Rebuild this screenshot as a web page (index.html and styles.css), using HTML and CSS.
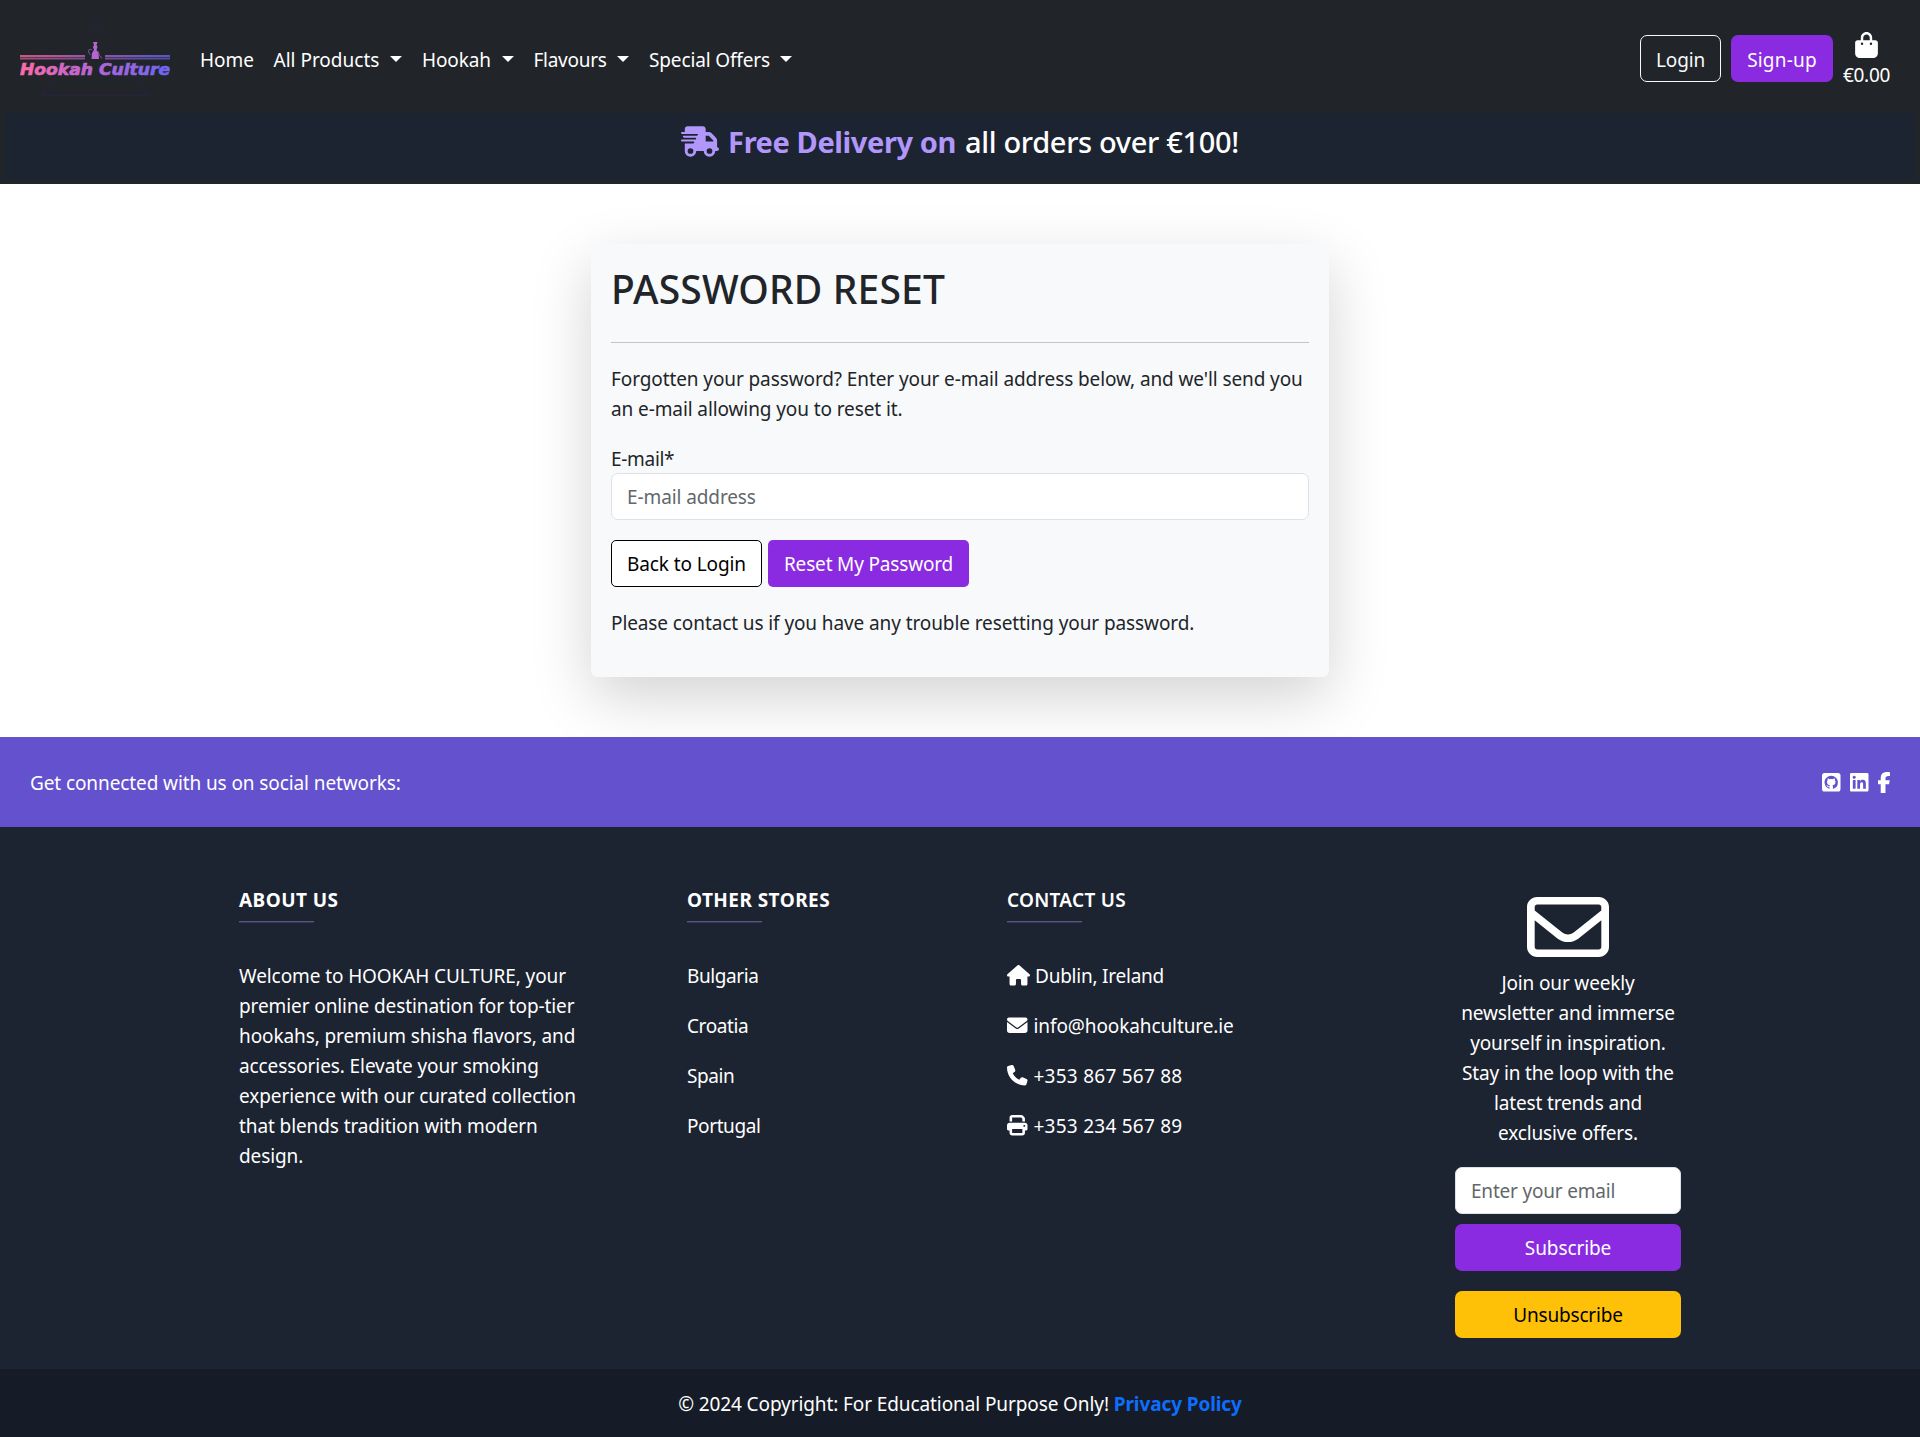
FILE: index.html
```html
<!DOCTYPE html>
<html lang="en">
<head>
<meta charset="utf-8">
<title>Hookah Culture - Password Reset</title>
<link rel="stylesheet" href="styles.css">
</head>
<body>
<header class="header">
  <nav class="navbar">
    <svg class="logo" viewBox="0 0 150 90" role="img" aria-label="Hookah Culture">
      <defs><linearGradient id="brand" gradientUnits="userSpaceOnUse" x1="0" y1="0" x2="150" y2="0"><stop offset="0" stop-color="#ff6aa6"/><stop offset=".5" stop-color="#b565d8"/><stop offset="1" stop-color="#6b66f5"/></linearGradient></defs>
      <path d="M65 17.500L75 4l10.500 13.500M32 63L22 77.500H129L118 63" fill="none" stroke="#2d1f42" stroke-width="1.200"/>
      <path d="M0 37h65v2h-65zM85 37h65v2h-65z" fill="url(#brand)" opacity=".75"/>
      <path d="M0 39.500h65v2h-65zM85 39.500h65v2h-65z" fill="url(#brand)" opacity=".6"/>
      <path d="M73 24h4.500l-1 3 1 2-1 3 2 3 .5 6h-7.500l.5-6 2-3-1-3 1-2z" fill="#b565d0"/>
      <path d="M72 32q-4-2-3.500 2l2 3M78 33q1 5 4 7.500" fill="none" stroke="#80509a" stroke-width="1"/>
      <text class="logo-text" x="0" y="56.500" textLength="150" lengthAdjust="spacingAndGlyphs" fill="url(#brand)" stroke="url(#brand)">Hookah Culture</text>
    </svg>
    <ul class="menu">
      <li class="menu-home">Home</li>
      <li class="menu-all">All Products<i class="caret"></i></li>
      <li class="menu-hookah">Hookah<i class="caret"></i></li>
      <li class="menu-flavours">Flavours<i class="caret"></i></li>
      <li class="menu-offers">Special Offers<i class="caret"></i></li>
    </ul>
    <div class="account">
      <a class="btn btn-login">Login</a>
      <a class="btn btn-purple btn-signup">Sign-up</a>
      <a class="bag">
        <svg class="bag-icon" viewBox="0 0 448 512" fill="currentColor"><path d="M160 112c0-35.300 28.700-64 64-64s64 28.700 64 64v48H160V112zm-48 48H48c-26.500 0-48 21.500-48 48V416c0 53 43 96 96 96H352c53 0 96-43 96-96V208c0-26.500-21.500-48-48-48H336V112C336 50.100 285.900 0 224 0S112 50.100 112 112v48zm24 48a24 24 0 1 1 0 48 24 24 0 1 1 0-48zm152 24a24 24 0 1 1 48 0 24 24 0 1 1 -48 0z"/></svg>
        €0.00
      </a>
    </div>
  </nav>
  <div class="banner">
    <svg class="truck" viewBox="0 0 640 512" fill="currentColor"><path d="M112 0C85.500 0 64 21.500 64 48V96H16c-8.800 0-16 7.200-16 16s7.200 16 16 16H64 272c8.800 0 16 7.200 16 16s-7.200 16-16 16H64 48c-8.800 0-16 7.200-16 16s7.200 16 16 16H64 240c8.800 0 16 7.200 16 16s-7.200 16-16 16H64 16c-8.800 0-16 7.200-16 16s7.200 16 16 16H64 208c8.800 0 16 7.200 16 16s-7.200 16-16 16H64V416c0 53 43 96 96 96s96-43 96-96H384c0 53 43 96 96 96s96-43 96-96h32c17.700 0 32-14.300 32-32s-14.300-32-32-32V288 256 237.300c0-17-6.700-33.300-18.700-45.300L512 114.700c-12-12-28.300-18.700-45.300-18.700H416V48c0-26.500-21.500-48-48-48H112zM544 237.300V256H416V160h50.700L544 237.300zM160 368a48 48 0 1 1 0 96 48 48 0 1 1 0-96zm272 48a48 48 0 1 1 96 0 48 48 0 1 1 -96 0z"/></svg>
    <strong class="banner-lead">Free Delivery on</strong>
    <span class="banner-rest">all orders over €100!</span>
  </div>
</header>

<main class="main">
  <section class="card">
    <h1 class="card-title">PASSWORD RESET</h1>
    <hr class="rule">
    <p class="para">Forgotten your password? Enter your e-mail address below, and we'll send you<br>an e-mail allowing you to reset it.</p>
    <label class="label">E-mail*</label>
    <div class="field">E-mail address</div>
    <div class="actions">
      <a class="btn btn-back">Back to Login</a>
      <a class="btn btn-purple btn-reset">Reset My Password</a>
    </div>
    <p class="para">Please contact us if you have any trouble resetting your password.</p>
  </section>
</main>

<footer class="footer">
  <section class="social">
    <span>Get connected with us on social networks:</span>
    <div class="social-icons">
      <svg class="ic-square" viewBox="0 0 18 18"><rect width="18" height="18" rx="2.500" fill="#fff"/><path transform="translate(2.500 2.700) scale(.81)" fill="#6351ce" d="M8 0C3.580 0 0 3.580 0 8c0 3.540 2.290 6.530 5.470 7.590.4.070.55-.17.55-.38 0-.19-.01-.82-.01-1.490-2.010.37-2.530-.49-2.690-.94-.09-.23-.48-.94-.82-1.130-.28-.15-.68-.52-.01-.53.63-.01 1.080.58 1.230.82.72 1.210 1.870.87 2.330.66.07-.52.28-.87.51-1.070-1.780-.2-3.640-.89-3.640-3.950 0-.87.31-1.590.82-2.150-.08-.2-.36-1.020.08-2.120 0 0 .67-.21 2.200.82.64-.18 1.320-.27 2-.27s1.360.09 2 .27c1.530-1.040 2.200-.82 2.200-.82.44 1.100.16 1.920.08 2.120.51.56.82 1.270.82 2.150 0 3.070-1.870 3.750-3.650 3.950.29.25.54.73.54 1.480 0 1.070-.01 1.930-.01 2.200 0 .21.15.46.55.38A8.010 8.010 0 0 0 16 8c0-4.420-3.580-8-8-8z"/></svg>
      <svg class="ic-square" viewBox="0 32 448 448" fill="currentColor"><path d="M416 32H31.900C14.300 32 0 46.500 0 64.300v383.400C0 465.500 14.300 480 31.900 480H416c17.600 0 32-14.500 32-32.300V64.300c0-17.800-14.400-32.300-32-32.300zM135.400 416H69V202.200h66.500V416zm-33.200-243c-21.300 0-38.500-17.300-38.500-38.500S80.900 96 102.200 96c21.200 0 38.500 17.300 38.500 38.500 0 21.300-17.200 38.500-38.500 38.500zm282.100 243h-66.400V312c0-24.800-.5-56.700-34.500-56.700-34.600 0-39.900 27-39.900 54.900V416h-66.400V202.200h63.700v29.200h.9c8.900-16.800 30.600-34.500 62.900-34.500 67.200 0 79.700 44.300 79.700 101.900V416z"/></svg>
      <svg class="ic-fb" viewBox="14 0 292 512" fill="currentColor"><path d="M80 299.300V512H196V299.300h86.500l18-97.800H196V166.900c0-51.700 20.300-71.500 72.700-71.500c16.300 0 29.400 .4 37 1.200V7.900C291.400 4 256.400 0 236.200 0C129.300 0 80 50.500 80 159.400v42.100H14v97.800H80z"/></svg>
    </div>
  </section>
  <section class="columns">
    <div class="col">
      <h6 class="col-title">ABOUT US</h6>
      <hr class="accent">
      <p>Welcome to HOOKAH CULTURE, your<br>premier online destination for top-tier<br>hookahs, premium shisha flavors, and<br>accessories. Elevate your smoking<br>experience with our curated collection<br>that blends tradition with modern<br>design.</p>
    </div>
    <div class="col">
      <h6 class="col-title">OTHER STORES</h6>
      <hr class="accent">
      <p class="item store">Bulgaria</p>
      <p class="item store">Croatia</p>
      <p class="item store">Spain</p>
      <p class="item store">Portugal</p>
    </div>
    <div class="col">
      <h6 class="col-title col-title-medium">CONTACT US</h6>
      <hr class="accent">
      <p class="item place"><svg class="ic-home" viewBox="0 0 576 512" fill="currentColor"><path d="M575.800 255.500c0 18-15 32.100-32 32.100h-32l.7 160.200c0 2.700-.2 5.400-.5 8.100V472c0 22.100-17.900 40-40 40H456c-1.100 0-2.200 0-3.300-.1c-1.400 .1-2.800 .1-4.200 .1H416 392c-22.100 0-40-17.900-40-40V448 384c0-17.700-14.300-32-32-32H256c-17.700 0-32 14.300-32 32v64 24c0 22.100-17.900 40-40 40H160 128.100c-1.500 0-3-.1-4.500-.2c-1.200 .1-2.400 .2-3.600 .2H104c-22.100 0-40-17.900-40-40V360c0-.9 0-1.900 .1-2.800V287.600H32c-18 0-32-14-32-32.100c0-9 3-17 10-24L266.400 8c7-7 15-8 22-8s15 2 21 7L564.800 231.500c8 7 12 15 11 24z"/></svg>Dublin, Ireland</p>
      <p class="item"><svg class="ic-line" viewBox="0 0 512 512" fill="currentColor"><path d="M48 64C21.500 64 0 85.500 0 112c0 15.100 7.100 29.300 19.200 38.400L236.800 313.600c11.400 8.500 27 8.500 38.400 0L492.800 150.400c12.100-9.100 19.200-23.300 19.200-38.400c0-26.500-21.500-48-48-48H48zM0 176V384c0 35.300 28.700 64 64 64H448c35.300 0 64-28.700 64-64V176L294.400 339.200c-22.800 17.100-54 17.100-76.800 0L0 176z"/></svg>info@hookahculture.ie</p>
      <p class="item phone"><svg class="ic-line" viewBox="0 0 512 512" fill="currentColor"><path d="M164.900 24.600c-7.700-18.600-28-28.500-47.400-23.200l-88 24C12.100 30.200 0 46 0 64C0 311.400 200.600 512 448 512c18 0 33.800-12.100 38.600-29.500l24-88c5.300-19.400-4.600-39.700-23.200-47.400l-96-40c-16.300-6.800-35.200-2.100-46.300 11.600L304.700 368C234.300 334.700 177.300 277.700 144 207.300L193.300 167c13.700-11.200 18.400-30 11.600-46.300l-40-96z"/></svg>+353 867 567 88</p>
      <p class="item phone"><svg class="ic-line" viewBox="0 0 512 512" fill="currentColor"><path d="M128 0C92.700 0 64 28.700 64 64v96h64V64H354.700L384 93.300V160h64V93.300c0-17-6.700-33.300-18.700-45.300L400 18.700C388 6.700 371.700 0 354.700 0H128zM384 352v32 64H128V384 368 352H384zm64 32h32c17.700 0 32-14.300 32-32V256c0-35.300-28.700-64-64-64H64c-35.300 0-64 28.700-64 64v96c0 17.700 14.300 32 32 32H64v64c0 35.300 28.700 64 64 64H384c35.300 0 64-28.700 64-64V384zM432 248a24 24 0 1 1 0 48 24 24 0 1 1 0-48z"/></svg>+353 234 567 89</p>
    </div>
    <div class="col newsletter">
      <svg class="mail" viewBox="0 64 512 384" preserveAspectRatio="none" fill="currentColor"><path d="M64 112c-8.800 0-16 7.200-16 16v22.100L220.500 291.700c20.700 17 50.400 17 71.100 0L464 150.100V128c0-8.800-7.200-16-16-16H64zM48 212.200V384c0 8.800 7.200 16 16 16H448c8.800 0 16-7.200 16-16V212.200L322 328.800c-38.400 31.500-93.700 31.500-132 0L48 212.200zM0 128C0 92.700 28.700 64 64 64H448c35.300 0 64 28.700 64 64V384c0 35.300-28.700 64-64 64H64c-35.300 0-64-28.700-64-64V128z"/></svg>
      <p class="pitch">Join our weekly<br>newsletter and immerse<br>yourself in inspiration.<br>Stay in the loop with the<br>latest trends and<br>exclusive offers.</p>
      <div class="field field-news">Enter your email</div>
      <a class="btn btn-purple btn-subscribe">Subscribe</a>
      <a class="btn btn-yellow">Unsubscribe</a>
    </div>
  </section>
  <div class="copyright">© 2024 Copyright: For Educational Purpose Only! <strong class="policy">Privacy Policy</strong></div>
</footer>
</body>
</html>
```
FILE: styles.css
```css
* { box-sizing: border-box; }
body { margin: 0; font-family: "Noto Sans", "Open Sans", sans-serif; font-size: 19px; line-height: 30px; letter-spacing: -.1px; color: #212529; background: #fff; }
p, h1, h6, ul, hr { margin: 0; padding: 0; }
svg { display: block; flex: none; }

.header { height: 184px; padding: 0 5px; background: #212529; color: #fff; }
.navbar { display: flex; height: 113px; padding: 0 25px 0 15px; }
.logo { width: 150px; height: 90px; margin-top: 18px; }
.logo-text { font: italic bold 15.5px "DejaVu Sans", sans-serif; letter-spacing: 0; stroke-width: .7px; }
.menu { display: flex; list-style: none; margin-left: 20px; padding-top: 45px; }
.menu li { display: flex; justify-content: space-between; padding: 0 10px; white-space: nowrap; }
.menu-home { width: 73.5px; letter-spacing: 0; }
.menu-all { width: 148.5px; letter-spacing: 0; }
.menu-hookah { width: 111.5px; }
.menu-flavours { width: 115.5px; letter-spacing: -.28px; }
.menu-offers { width: 163px; letter-spacing: -.14px; }
.caret { margin-top: 11px; width: 12px; height: 6px; border: 6px solid transparent; border-top-color: #fff; border-bottom: 0; }
.account { display: flex; margin-left: auto; padding-top: 35px; }
.btn { display: block; height: 47px; padding: 9px 0 7px; line-height: 30px; text-align: center; border-radius: 7px; white-space: nowrap; }
.btn-purple { background: #8a2be2; color: #fff; }
.btn-login { width: 81px; padding-top: 9px; border: 1px solid #f8f9fa; margin-right: 10px; color: #f8f9fa; letter-spacing: -.16px; }
.btn-signup { width: 102px; padding-top: 10px; margin-right: 10px; letter-spacing: .2px; }
.bag { width: 47px; margin-top: -3px; display: flex; flex-direction: column; align-items: center; white-space: nowrap; letter-spacing: -.3px; }
.bag-icon { width: 23px; height: 26px; margin-bottom: 2px; }
.banner { display: flex; height: 66px; padding-top: 11px; justify-content: center; background: #1c2331; font-size: 29px; line-height: 36px; white-space: nowrap; }
.truck { width: 38px; height: 31px; margin: 2px 9px 0 0; color: #b197fc; }
.banner-lead { margin-right: 9px; color: #b197fc; font-weight: 700; letter-spacing: -.4px; }
.banner-rest { font-weight: 500; letter-spacing: -.33px; }

.main { display: flex; justify-content: center; height: 553px; padding-top: 60px; }
.card { width: 738px; height: 433px; padding: 20px; border-radius: 6px; background: #f8f9fb; box-shadow: 0 20px 60px rgba(0, 0, 0, .175); white-space: nowrap; }
.card-title { height: 48px; margin-bottom: 30px; font-size: 39px; line-height: 50px; font-weight: 500; letter-spacing: .15px; }
.rule { height: 1px; border: 0; background: #c2c4c7; margin-bottom: 21px; }
.para { margin-bottom: 20px; }
.label { display: block; height: 29px; letter-spacing: -.3px; }
.field { height: 47px; padding: 8px 15px; border: 1px solid #dee2e6; border-radius: 7px; background: #fff; color: #62676c; text-align: left; white-space: nowrap; }
.field-news { letter-spacing: -.2px; }
.actions { display: flex; gap: 6px; margin: 20px 0 21px; }
.btn-back { width: 151px; padding-top: 8px; border: 1px solid #000; border-radius: 5px; background: #fff; color: #000; }
.btn-reset { width: 201px; border-radius: 5px; letter-spacing: -.17px; }

.footer { background: #1c2331; color: #fff; }
.main + .footer { position: relative; }
.social { display: flex; justify-content: space-between; height: 90px; padding: 31px 30px 0; background: #6351ce; }
.social-icons { display: flex; gap: 9.5px; padding-top: 4px; }
.ic-square { width: 18.5px; height: 18.5px; margin-top: 1px; }
.ic-fb { width: 12px; height: 21px; }
.columns { display: grid; grid-template-columns: 448px 320px 448px 226px; height: 542px; padding: 60px 239px 0; white-space: nowrap; }
.col-title { height: 34px; font-size: 19px; line-height: 27px; font-weight: 700; letter-spacing: .45px; }
.col-title-medium { font-weight: 600; letter-spacing: .28px; }
.accent { width: 75px; height: 2px; border: 0; border-top: 1px solid #56596a; background: #3d2f6b; margin-bottom: 38px; }
.item { display: flex; margin-bottom: 20px; }
.store { letter-spacing: -.4px; }
.place { letter-spacing: -.23px; }
.phone { letter-spacing: .25px; }
.ic-home { width: 23px; height: 20.5px; margin: 4px 5px 0 0; }
.ic-line { width: 20.5px; height: 20.5px; margin: 4px 6px 0 0; }
.newsletter { text-align: center; }
.mail { width: 82px; height: 60px; margin: 10px auto 11px; }
.pitch { margin-bottom: 19px; letter-spacing: -.15px; }
.btn-subscribe { margin: 10px 0 20px; }
.btn-yellow { background: #ffc107; color: #000; letter-spacing: -.2px; }
.copyright { height: 68px; padding-top: 20px; text-align: center; background: #161c27; white-space: nowrap; }
.policy { color: #0d6efd; font-weight: 700; }
```
